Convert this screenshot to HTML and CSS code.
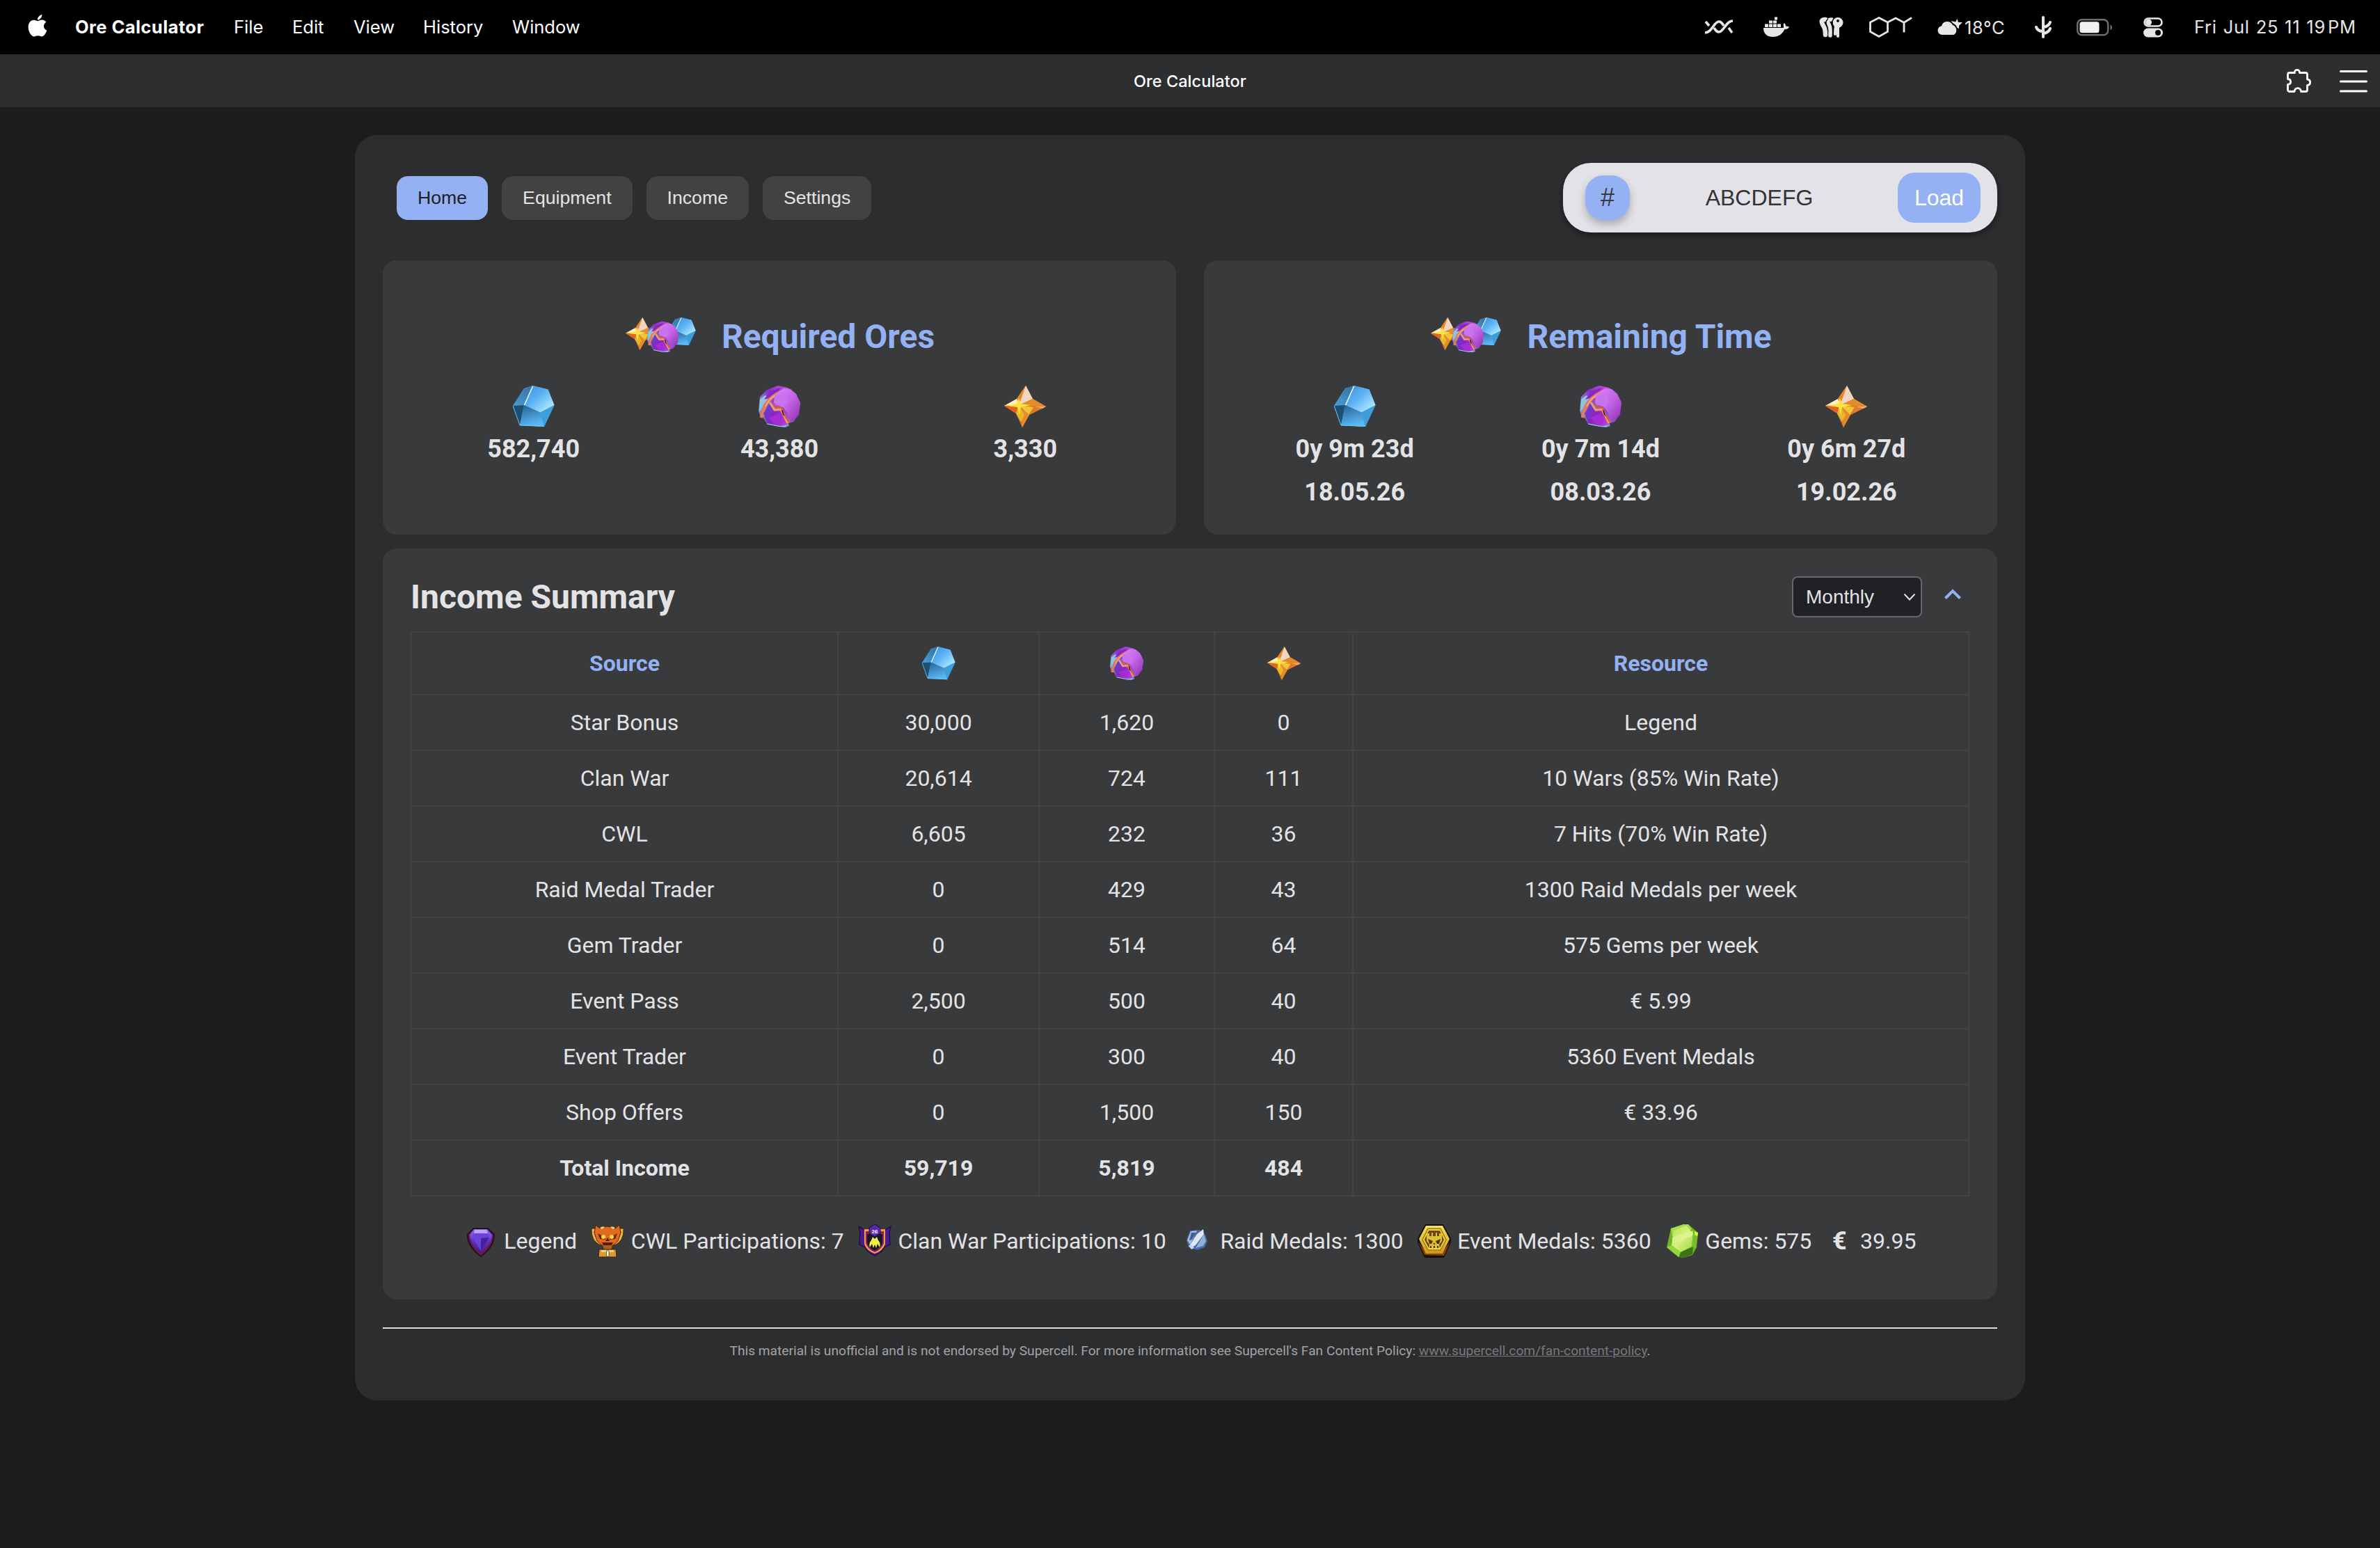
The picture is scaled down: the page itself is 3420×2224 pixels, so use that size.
FILE: index.html
```html
<!DOCTYPE html>
<html lang="en">
<head>
<meta charset="utf-8">
<title>Ore Calculator</title>
<link rel="stylesheet" href="styles.css">
</head>
<body>
<svg class="defs" aria-hidden="true">
  <defs>
    <linearGradient id="bTop" x1="0" y1="0" x2="1" y2="1"><stop offset="0" stop-color="#3a8fd0"/><stop offset=".45" stop-color="#5cb2f5"/><stop offset="1" stop-color="#c9fbff"/></linearGradient>
    <linearGradient id="bLeft" x1="1" y1="0" x2="0" y2="1"><stop offset="0" stop-color="#356f9f"/><stop offset="1" stop-color="#4a9ed8"/></linearGradient>
    <linearGradient id="bFront" x1="0" y1="0" x2=".3" y2="1"><stop offset="0" stop-color="#255f8d"/><stop offset="1" stop-color="#5bb8f5"/></linearGradient>
    <linearGradient id="pRight" x1="0" y1="0" x2="1" y2="1"><stop offset="0" stop-color="#dd84fb"/><stop offset=".5" stop-color="#c463e6"/><stop offset="1" stop-color="#8a2fae"/></linearGradient>
    <linearGradient id="pLow" x1="0" y1=".2" x2="1" y2=".8"><stop offset="0" stop-color="#5a49cf"/><stop offset=".45" stop-color="#8a24c0"/><stop offset="1" stop-color="#b73fdc"/></linearGradient>
    <linearGradient id="pBack" x1=".9" y1="0" x2="0" y2="1"><stop offset="0" stop-color="#d264e8"/><stop offset=".4" stop-color="#8c2cc8"/><stop offset=".7" stop-color="#7fa6cf"/><stop offset="1" stop-color="#6b2aa8"/></linearGradient>
    <linearGradient id="gemP" x1="0" y1="0" x2="0" y2="1"><stop offset="0" stop-color="#8a6df0"/><stop offset=".5" stop-color="#5c33c4"/><stop offset="1" stop-color="#4a1a6c"/></linearGradient>
    <linearGradient id="gold" x1="0" y1="0" x2="0" y2="1"><stop offset="0" stop-color="#f7e555"/><stop offset="1" stop-color="#c99a1d"/></linearGradient>
    <linearGradient id="grn" x1="0" y1="0" x2="1" y2="1"><stop offset="0" stop-color="#b4e45a"/><stop offset=".5" stop-color="#d6f080"/><stop offset="1" stop-color="#9ad440"/></linearGradient>
  </defs>
  <symbol id="shiny" viewBox="0 0 60 60">
    <path d="M28.500 0L16 4L0 29L10 57L45 59L59.500 28L50.500 5.500Z" fill="#4aa6e6"/>
    <path d="M28.500 0L16 4L0 29L16 28Z" fill="url(#bLeft)"/>
    <path d="M28.500 0L50.500 5.500L59.500 28L39.500 38.500L16 28Z" fill="url(#bTop)"/>
    <path d="M0 29L16 28L10 57Z" fill="#1d4f74"/>
    <path d="M16 28L39.500 38.500L45 59L10 57Z" fill="url(#bFront)"/>
    <path d="M39.500 38.500L59.500 28L45 59Z" fill="#3f9ddb"/>
    <path d="M28.500 1L16.500 28" stroke="#e8f8ff" stroke-width="1.600" fill="none"/>
    <path d="M0 29L10 57L45 58.500" stroke="#5fd0f0" stroke-width="1" fill="none"/>
  </symbol>
  <symbol id="glowy" viewBox="0 0 60 60">
    <path d="M28 0L12 6L2 16L0 36L3 46L7 46L12 55L30 59L38 60L44 58L43 54L50 52L58 42L60 24L54 12L42 3Z" fill="url(#pBack)"/>
    <path d="M9 14L2 20L1 38L8 26L18 18Z" fill="#8fc4dc"/>
    <path d="M32 3L16 9L8 20L22 16Z" fill="#8427c4"/>
    <path d="M37 7Q14 16 8 32L4 46" stroke="#e8795c" stroke-width="5" fill="none"/>
    <path d="M35 8Q16 16 10 30" stroke="#f7b08a" stroke-width="1.500" fill="none"/>
    <path d="M16 24L7 40L12 54L32 59L42 55L33 37L23 36Z" fill="url(#pLow)"/>
    <path d="M15 46L30 40L34 54L24 56Z" fill="#a52bd2"/>
    <path d="M22 24L23 14L36 4L46 5L54 12L60 26L57 42L47 53L40 38L35 31L24 27Z" fill="url(#pRight)"/>
    <path d="M24 27L23 14L36 12L42 24L36 31Z" fill="#c874ee"/>
    <path d="M16 24L23 35L32 34L42 54" stroke="#f39a6c" stroke-width="3.200" fill="none"/>
    <path d="M22 26L26 31L33 32L37 42L44 53" stroke="#e2583a" stroke-width="2.400" fill="none"/>
    <path d="M33 35L35 42L37 44L35 36Z" fill="#2a0d10"/>
    <path d="M12 55L30 58.500L40 58" stroke="#8fd6e2" stroke-width="1.200" fill="none"/>
  </symbol>
  <symbol id="starry" viewBox="0 0 60 60">
    <path d="M31 0L41 19L60 30L36 42L26 60L17 40L0 29L18 19Z" fill="#eda42c"/>
    <path d="M31 0L41 19L21 28Z" fill="#efd6c2"/>
    <path d="M31 0L18 19L21 28Z" fill="#e8832c"/>
    <path d="M0 29L18 19L21 28Z" fill="#fbf0c4"/>
    <path d="M0 29L17 40L21 28Z" fill="#e0661f"/>
    <path d="M41 19L60 30L21 28Z" fill="#e58a2a"/>
    <path d="M60 30L36 42L32 32L21 28Z" fill="#dd7a2c"/>
    <path d="M21 28L42 31L35 42Z" fill="#f0c53a"/>
    <path d="M26 60L36 42L21 28Z" fill="#e88a2a"/>
    <path d="M26 60L17 40L21 28Z" fill="#d9622a"/>
    <path d="M17 40L21 28L29 42L24 52Z" fill="#e6b92a"/>
    <path d="M21 18L24 26L38 28L24 31L22 42L19 31L4 29L18 26Z" fill="#fde23f"/>
    <path d="M60 30L44 30L55 33Z" fill="#f2a878"/>
  </symbol>
  <symbol id="trio" viewBox="0 0 101 50">
    <use href="#shiny" x="60.500" y="0" width="40.500" height="40.500"/>
    <use href="#starry" x="0" y="0" width="47" height="47"/>
    <use href="#glowy" x="31" y="5.500" width="45" height="45"/>
  </symbol>
</svg>

<header class="menubar">
  <svg class="apple" viewBox="0 0 28 32"><path d="M20.300 0C20.600 3.500 17.500 7.600 13.900 7.600C13.500 4.200 17 .5 20.300 0Z"/><path d="M14.300 9.200C15.600 9.200 17.700 7.600 20.500 7.600C22.800 7.700 25 8.800 26.300 10.700C21.300 13.900 22.200 20.700 27.300 22.800C26.100 26.400 23.100 31.500 20 31.500C18 31.500 17 30.300 14.500 30.300C12 30.300 10.900 31.500 9 31.500C5.200 31.500 .6 24.600 .6 18C.6 11.600 4.500 7.900 8.500 7.800C11 7.800 13 9.200 14.300 9.200Z"/></svg>
  <nav class="menus">
    <span class="menu app">Ore Calculator</span>
    <span class="menu file">File</span>
    <span class="menu edit">Edit</span>
    <span class="menu view">View</span>
    <span class="menu history">History</span>
    <span class="menu">Window</span>
  </nav>
  <div class="status">
    <svg width="48" height="40" viewBox="0 0 48 40"><g fill="none" stroke="#e6e6e6" stroke-width="3.600"><path d="M4 28C14 28 17 12 24 12C28 12 29 15 31 18"/><path d="M44 11C34 11 31 27 24 27C20 27 19 24 17 21"/><path d="M5 12L10 18M38 21L43 28"/></g></svg>
    <svg width="44" height="40" viewBox="0 0 44 40" fill="#e6e6e6"><path d="M4 21H33C33 17 32 16 34 14C36 16 36.500 18 36.500 19C38 18.500 40 19 41 20C39.500 22.500 37 23 34.500 23C31 30 26 34 17 34C9 34 4 29 4 21Z"/><path d="M6 15.500h5v4.500h-5zM12 15.500h5v4.500h-5zM18 15.500h5v4.500h-5zM24 15.500h5v4.500h-5zM12 10.500h5v4h-5zM18 10.500h5v4h-5zM20 5.500h4v4h-4z"/></svg>
    <svg width="40" height="40" viewBox="0 0 40 40"><g fill="none" stroke="#e6e6e6" stroke-width="6.500" stroke-linecap="round"><path d="M13 9C7 9 7 12 9 16C12 21 13 23 13 31"/><path d="M22 9C16 9 16 12 18 16C21 21 20 24 20 32" stroke-width="5.500"/><path d="M31 20V33M28 18Q27 24 27 30" stroke-width="4"/></g><circle cx="31" cy="13.500" r="7.500" fill="#e6e6e6"/><circle cx="31" cy="11" r="1.900"/><path d="M17 8C12 12 14 16 16 20M25 8C21 12 23 17 24 21" fill="none" stroke="#000" stroke-width="1.200"/></svg>
    <svg width="62" height="40" viewBox="0 0 62 40"><path d="M14 6.500L26.500 13V26.500L14 33.500L1.500 26.500V13ZM26.500 13L38 7L50 13.500L61 6.500M50 13.500V27.500" fill="none" stroke="#e6e6e6" stroke-width="2.800"/></svg>
    <span class="weather"><svg width="36" height="40" viewBox="0 0 36 40" fill="#e6e6e6"><path d="M8 31C-2 31-1 19 6 18.500C7 10.500 19 9.500 22 17C30 20 28 31 22 31Z"/><path d="M22 14L19.500 11L26 12.500L28.500 8L30 13L36 13L31 18L31 22L28.500 21C27 17 25 16 22 14Z"/></svg>18°C</span>
    <svg width="32" height="40" viewBox="0 0 32 40"><g fill="none" stroke="#e6e6e6" stroke-width="4" stroke-linecap="round"><path d="M20 6V34M20 20Q28 19 30 13M20 29Q28 28 30 22M20 26Q12 26 10 20"/></g></svg>
    <svg width="52" height="40" viewBox="0 0 52 40"><rect x="1.200" y="9.200" width="44" height="22" rx="6.500" fill="none" stroke="#6e6e6e" stroke-width="2.400"/><rect x="4.500" y="12.200" width="28" height="16" rx="3.500" fill="#f0f0f0"/><path d="M48.500 16.500Q51 17.500 51 20.200Q51 23 48.500 24Z" fill="#777"/></svg>
    <svg width="45" height="40" viewBox="0 0 45 40"><rect x="9.500" y="7.500" width="25" height="11" rx="5.500" fill="none" stroke="#e6e6e6" stroke-width="2.600"/><circle cx="15.500" cy="13" r="4.500" fill="#e6e6e6"/><rect x="8" y="21.500" width="28" height="13" rx="6.500" fill="#e6e6e6"/><circle cx="29" cy="28" r="4"/></svg>
    <span class="clock">Fri Jul 25 11 19&#8202;PM</span>
  </div>
</header>

<div class="titlebar">
  <span class="window-title">Ore Calculator</span>
  <div class="tools">
    <svg width="36" height="34" viewBox="0 0 36 34"><path d="M5 5.500H12.500C11.500 0 20 0 19.500 5.500H28Q30.500 5.500 30.500 8V15C36 15.500 36 23 30.500 23.500V30Q30.500 32.500 28 32.500H21.500C21 26 12.500 26 12 32.500H5Q2.500 32.500 2.500 30V22.500C8 22 8 15 2.500 14.500V8Q2.500 5.500 5 5.500Z" fill="none" stroke="#fff" stroke-width="2.800" stroke-linejoin="round"/></svg>
    <svg width="40" height="34" viewBox="0 0 40 34"><path d="M1.500 3.500H38.500M1.500 18H38.500M1.500 32H38.500" stroke="#fff" stroke-width="3" stroke-linecap="round"/></svg>
  </div>
</div>

<main class="container">
  <div class="topbar">
    <nav class="tabs">
      <button class="tab active">Home</button>
      <button class="tab">Equipment</button>
      <button class="tab">Income</button>
      <button class="tab">Settings</button>
    </nav>
    <div class="search">
      <span class="hash">#</span>
      <span class="tag">ABCDEFG</span>
      <button class="load">Load</button>
    </div>
  </div>

  <div class="cards">
    <section class="card">
      <h2 class="card-title"><svg width="101" height="50"><use href="#trio"/></svg>Required Ores</h2>
      <div class="ores">
        <div class="ore"><svg width="60" height="60"><use href="#shiny"/></svg><span>582,740</span></div>
        <div class="ore"><svg width="60" height="60"><use href="#glowy"/></svg><span>43,380</span></div>
        <div class="ore"><svg width="60" height="60"><use href="#starry"/></svg><span>3,330</span></div>
      </div>
    </section>
    <section class="card">
      <h2 class="card-title"><svg width="101" height="50"><use href="#trio"/></svg>Remaining Time</h2>
      <div class="ores">
        <div class="ore"><svg width="60" height="60"><use href="#shiny"/></svg><span>0y 9m 23d</span><span>18.05.26</span></div>
        <div class="ore"><svg width="60" height="60"><use href="#glowy"/></svg><span>0y 7m 14d</span><span>08.03.26</span></div>
        <div class="ore"><svg width="60" height="60"><use href="#starry"/></svg><span>0y 6m 27d</span><span>19.02.26</span></div>
      </div>
    </section>
  </div>

  <section class="summary">
    <div class="summary-head">
      <h2 class="summary-title">Income Summary</h2>
      <div class="controls">
        <div class="select">Monthly<svg width="18" height="12" viewBox="0 0 18 12"><path d="M1.500 1.500L9 9.500L16.500 1.500" fill="none" stroke="#e3e3e3" stroke-width="2"/></svg></div>
        <svg class="chevron" width="26" height="16" viewBox="0 0 26 16"><path d="M2.500 13.500L13 3L23.500 13.500" fill="none" stroke="#93b1f3" stroke-width="4"/></svg>
      </div>
    </div>
    <table class="income">
      <colgroup><col class="c-source"><col class="c-shiny"><col class="c-glowy"><col class="c-starry"><col class="c-resource"></colgroup>
      <thead><tr><th>Source</th><th><svg width="48" height="48"><use href="#shiny"/></svg></th><th><svg width="48" height="48"><use href="#glowy"/></svg></th><th><svg width="48" height="48"><use href="#starry"/></svg></th><th>Resource</th></tr></thead>
      <tbody>
        <tr><td>Star Bonus</td><td>30,000</td><td>1,620</td><td>0</td><td>Legend</td></tr>
        <tr><td>Clan War</td><td>20,614</td><td>724</td><td>111</td><td>10 Wars (85% Win Rate)</td></tr>
        <tr><td>CWL</td><td>6,605</td><td>232</td><td>36</td><td>7 Hits (70% Win Rate)</td></tr>
        <tr><td>Raid Medal Trader</td><td>0</td><td>429</td><td>43</td><td>1300 Raid Medals per week</td></tr>
        <tr><td>Gem Trader</td><td>0</td><td>514</td><td>64</td><td>575 Gems per week</td></tr>
        <tr><td>Event Pass</td><td>2,500</td><td>500</td><td>40</td><td>€ 5.99</td></tr>
        <tr><td>Event Trader</td><td>0</td><td>300</td><td>40</td><td>5360 Event Medals</td></tr>
        <tr><td>Shop Offers</td><td>0</td><td>1,500</td><td>150</td><td>€ 33.96</td></tr>
        <tr class="total"><td>Total Income</td><td>59,719</td><td>5,819</td><td>484</td><td></td></tr>
      </tbody>
    </table>
    <div class="legend">
      <span class="entry"><svg width="48" height="48" viewBox="0 0 48 48"><path d="M13 5H34L44 14Q45 32 24 47Q3 32 4 14Z" fill="#2a0d22"/><path d="M14 7H33L42 15Q42 31 24 45Q6 31 6 15Z" fill="#6a1a4c"/><path d="M14 7H33L40 15Q40 28 24 42Q8 28 8 15Z" fill="url(#gemP)"/><path d="M15 8H32L34 13H14Z" fill="#b9a6fb"/><path d="M14 13H34L36 19L24 38L12 19Z" fill="#6a42da"/><path d="M24 20L36 19L24 38Z" fill="#44209c"/></svg>Legend</span>
      <span class="entry"><svg width="48" height="48" viewBox="0 0 48 48"><path d="M1 6H12V10H5Q6 22 16 27L14 30Q0 24 1 6ZM47 6H36V10H43Q42 22 32 27L34 30Q48 24 47 6Z" fill="#e6b942" stroke="#2a1608" stroke-width=".8"/><path d="M7 1L13 6Q24 0 35 6L41 1L43 12L39 24L31 31H17L9 24L5 12Z" fill="#e26a1e" stroke="#3a1608" stroke-width=".8"/><path d="M13 5Q17 2 20 4L16 7ZM35 5Q31 2 28 4L32 7Z" fill="#f5d86a"/><path d="M10 13L20 18L21 22L13 21ZM38 13L28 18L27 22L35 21Z" fill="#6e260c"/><circle cx="18" cy="18" r="3" fill="#ffd738"/><circle cx="30" cy="18" r="3" fill="#ffd738"/><path d="M24 19L27 24H21ZM16 26H32L30 30H18Z" fill="#5a1c0a"/><path d="M17 30H31L29 36H19Z" fill="#a9601e"/><path d="M12 36H36L37 47H11Z" fill="#d79a34" stroke="#3a1f08" stroke-width="1"/><path d="M15 37H33V40H15Z" fill="#f3cf73"/><path d="M22.500 38H26V46H22.500Z" fill="#fff" stroke="#60401a" stroke-width=".8"/></svg>CWL Participations: 7</span>
      <span class="entry"><svg width="48" height="48" viewBox="0 0 48 48"><path d="M1 3L9 8H17L24 1L31 8H39L47 3L45 12L46 29L38 33Q34 41 24 45Q14 41 10 33L2 29L3 12Z" fill="#4b1b8e" stroke="#1c0838" stroke-width="1.200"/><path d="M9 7H39V28Q36 38 24 42Q12 38 9 28Z" fill="#f2a035"/><path d="M11 10H37V27Q34 36 24 40Q14 36 11 27Z" fill="#8b1f6a"/><path d="M13 14H35V27Q32 34 24 38Q16 34 13 27Z" fill="#171922"/><path d="M24 0L32 5V13L24 18L16 13V5Z" fill="#5b2aa8" stroke="#1c0838"/><path d="M17 33Q15 27 19 23L21 18L24 21L27 18L29 23Q33 27 31 33L28 28L26 34L24 29L22 34L20 28Z" fill="#eef04a"/><text x="24" y="12.500" class="shield-no">26</text></svg>Clan War Participations: 10</span>
      <span class="entry"><svg width="48" height="48" viewBox="0 0 48 48"><path d="M14 9L28 8L36 15L39 24L35 33L24 37L12 33L9 23Z" fill="#4a68a8"/><path d="M15 10L24 9L19 20L14 29L10 23Z" fill="#9fbbdf"/><path d="M24 14L33 7L34 14L22 30L17 33L13 31Z" fill="#dce8f5"/><path d="M34 14L37 24L33 31L22 34L28 24Z" fill="#8fb0da"/><path d="M16 12L23 12L17 22L13 23Z" fill="#3f5e98"/><path d="M12 31L16 29L20 34L16 36Z" fill="#c4d6ec"/></svg>Raid Medals: 1300</span>
      <span class="entry"><svg width="48" height="48" viewBox="0 0 48 48"><path d="M11 0H37L48 20V26L38 48H10L0 26V20Z" fill="#17110a"/><path d="M10 44L1 25L12 40H36L47 25L38 45Z" fill="#8a3f14"/><path d="M12 2H36L46 21L36 42H12L2 21Z" fill="url(#gold)"/><path d="M15 6H33L41 22L33 37H15L7 22Z" fill="#f0d23c" stroke="#a87718" stroke-width="1.500"/><path d="M16 9H32L38 22L32 34H16L10 22Z" fill="#6b4a10"/><path d="M13 13H17V17H20V12H22V17H26V12H28V17H31V13H35V24L31 29L32 34H16L17 29L13 24Z" fill="#e0bf35"/><path d="M15 21L22 24L20 28H17ZM33 21L26 24L28 28H31ZM24 26L25.500 29H22.500ZM18 31H20V34H18ZM23 31H25V34H23ZM28 31H30V34H28Z" fill="#4c340c"/></svg>Event Medals: 5360</span>
      <span class="entry"><svg width="48" height="48" viewBox="0 0 48 48"><path d="M26 0L33 0L47 12L45 33L39 44L26 48L19 47L2 33L8 6Z" fill="#6cb526"/><path d="M26 0L33 0L38 7L10 17L8 6Z" fill="#a6de4a"/><path d="M12 9L30 2L40 13L38 32L22 40L9 30Z" fill="url(#grn)"/><path d="M10 19L40 9L39 17L10 28Z" fill="#e0f596" opacity=".7"/><path d="M2 33L9 30L22 40L19 47Z" fill="#92d63e"/><path d="M22 40L40 32L39 43L26 48L20 47Z" fill="#3c7416"/><path d="M40 13L47 12L44 34L38 32Z" fill="#76c02c"/><path d="M42 10L47 12L46 17L42 15Z" fill="#d8f53a"/></svg>Gems: 575</span>
      <span class="entry money"><b class="euro">€</b>39.95</span>
    </div>
  </section>

  <footer class="footer">This material is unofficial and is not endorsed by Supercell. For more information see Supercell's Fan Content Policy: <a class="policy" href="#">www.supercell.com/fan-content-policy</a>.</footer>
</main>
</body>
</html>
```

FILE: styles.css
```css
* { box-sizing: border-box; }
body { margin: 0; background: #1b1c1e; color: #e3e3e6; font-family: Roboto, "Liberation Sans", sans-serif; height: 2224px; overflow: hidden; }
svg { display: block; flex: none; }
button { border: 0; font: inherit; }
.defs { position: absolute; width: 0; height: 0; }

.menubar { height: 78px; background: #000; color: #fff; display: flex; align-items: center; padding: 0 34px 0 40px; font: 400 25.5px Inter, sans-serif; }
.apple { width: 28px; height: 32px; fill: #fff; position: relative; top: -2px; }
.menus { display: flex; margin-left: 40px; padding-bottom: 2px; white-space: nowrap; }
.app { width: 228px; font-weight: 700; letter-spacing: .45px; }
.file { width: 84px; }
.edit { width: 88px; }
.view { width: 100px; }
.history { width: 128px; }
.status { margin-left: auto; display: flex; align-items: center; gap: 36px; color: #e6e6e6; white-space: nowrap; }
.weather { display: flex; align-items: center; gap: 3px; width: 96px; letter-spacing: .6px; }
.clock { width: 233px; padding-bottom: 2px; letter-spacing: .75px; word-spacing: 1px; }

.titlebar { height: 76px; background: #2d2e30; display: grid; grid-template-columns: 1fr auto 1fr; align-items: center; padding: 0 18px; }
.window-title { grid-column: 2; font: 500 23.5px Inter, sans-serif; color: #fff; letter-spacing: .05px; }
.tools { justify-self: end; display: flex; gap: 41px; }

.container { width: 2400px; height: 1818px; margin: 40px auto 0; padding: 40px; background: #2c2d2f; border-radius: 32px; }
.topbar { height: 100px; display: flex; justify-content: space-between; align-items: center; padding-left: 20px; }
.tabs { display: flex; gap: 20px; }
.tab { height: 63px; padding: 0 30px; border-radius: 16px; background: #424242; color: #e3e3e6; font: 26.67px "Liberation Sans", sans-serif; }
.tab.active { background: #93b1f3; color: #1f2024; }
.search { width: 624px; height: 100px; border-radius: 40px; background: #e3e2e7; display: flex; align-items: center; padding: 0 24px 0 32px; box-shadow: 0 4px 8px rgba(0,0,0,.4); font: 32px "Liberation Sans", sans-serif; }
.hash { width: 64px; height: 64px; border-radius: 26px; background: #93b1f3; color: #3a3a3c; display: grid; place-items: center; font-size: 36px; box-shadow: 0 6px 12px rgba(0,0,0,.25); }
.tag { flex: 1; text-align: center; color: #333335; padding-right: 13px; }
.load { width: 119px; height: 72px; padding: 0; border-radius: 24px; background: #93b1f3; color: #fff; }

.cards { display: grid; grid-template-columns: 1fr 1fr; gap: 40px; margin-top: 40px; }
.card { height: 394px; border-radius: 20px; background: #393a3c; padding: 82px 40px 0; }
.card-title { margin: 0; padding-left: 2px; height: 56px; line-height: 56px; font-size: 48px; color: #93b1f3; display: flex; justify-content: center; gap: 37px; }
.ores { display: grid; grid-template-columns: repeat(3, 1fr); margin-top: 42px; }
.ore { display: flex; flex-direction: column; align-items: center; font-weight: 700; font-size: 36px; line-height: 62px; }

.summary { margin-top: 20px; height: 1079px; border-radius: 20px; background: #393a3c; padding: 40px; }
.summary-head { height: 59px; display: flex; justify-content: space-between; align-items: center; }
.summary-title { margin: 0; font-size: 48px; line-height: 59px; }
.controls { display: flex; align-items: center; gap: 31px; padding-right: 11px; }
.select { width: 187px; height: 59px; border: 2px solid #65676d; border-radius: 8px; background: #202125; padding: 0 7px 0 18px; display: flex; align-items: center; justify-content: space-between; font: 28px "Liberation Sans", sans-serif; }
.chevron { position: relative; top: -4px; }
.income { width: 2240px; table-layout: fixed; border-collapse: collapse; margin-top: 20px; font-size: 32px; text-align: center; }
.c-source { width: 613px; }
.c-shiny { width: 289px; }
.c-glowy { width: 252px; }
.c-starry { width: 199px; }
.income th, .income td { border: 2px solid #434344; padding: 0; height: 80px; }
.income th { height: 90px; color: #93b1f3; }
.income th svg { margin: 0 auto; }
.total { font-weight: 700; }

.legend { display: flex; justify-content: center; gap: 20px; margin-top: 40px; height: 48px; font-size: 32px; white-space: nowrap; }
.entry { display: flex; align-items: center; gap: 9.7px; }
.shield-no { font: 700 8px "Liberation Sans", sans-serif; fill: #fff; text-anchor: middle; }
.euro { width: 40px; font-size: 36px; text-align: center; }

.footer { margin-top: 40px; border-top: 2px solid #d9dcdf; padding-top: 20px; text-align: center; font-size: 19.2px; line-height: 24px; color: #a3a3a5; }
.policy { color: #77787a; text-decoration: underline; }
```
